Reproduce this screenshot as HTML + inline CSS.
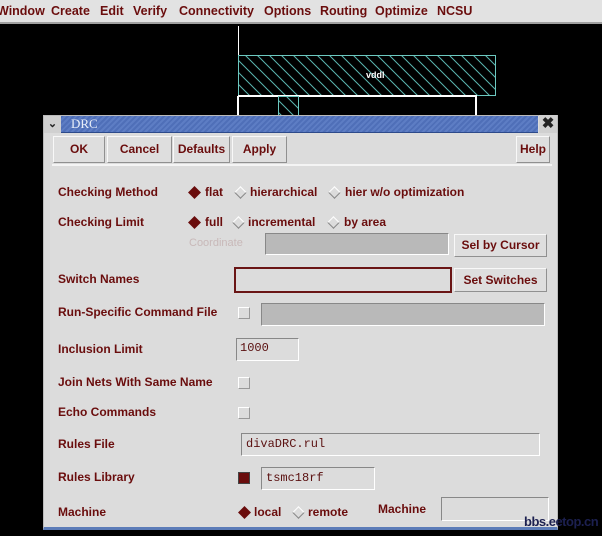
<!DOCTYPE html>
<html><head><style>
*{margin:0;padding:0;box-sizing:border-box}
body{width:602px;height:536px;background:#000;position:relative;overflow:hidden;font-family:"Liberation Sans",sans-serif;font-weight:bold;font-size:12px;color:#6a0d0d}
.a{position:absolute;white-space:nowrap}
.menu{left:0;top:0;width:602px;height:24px;background:#e2e2e2;border-bottom:2px solid #a0a0a0}
.menu span{position:absolute;top:4px;font-size:12.5px}
.btn{position:absolute;background:#dedede;border:1px solid;border-color:#f8f8f8 #909090 #909090 #f8f8f8;text-align:center;line-height:24px}
.lbl{position:absolute;font-size:12px}
.fld{position:absolute;border:1px solid;border-color:#888 #fff #fff #888}
.gray{background:#b9b9b9}
.dia{position:absolute;width:9px;height:9px;transform:rotate(45deg);border:1px solid;border-color:#fff #888 #888 #fff}
.dia.on{background:#6a0d0d;border-color:#6a0d0d}
.cb{position:absolute;width:12px;height:12px;border:1px solid;border-color:#fff #999 #999 #fff;background:#dcdcdc}
.mono{font-family:"Liberation Mono",monospace;font-weight:normal;font-size:12px;color:#5a1010}
</style></head><body>
<div class="a menu">
<span style="left:-3px">Window</span><span style="left:51px">Create</span><span style="left:100px">Edit</span><span style="left:133px">Verify</span><span style="left:179px">Connectivity</span><span style="left:264px">Options</span><span style="left:320px">Routing</span><span style="left:375px">Optimize</span><span style="left:437px">NCSU</span>
</div>
<svg class="a" style="left:0;top:26px" width="602" height="100">
<defs><pattern id="h" width="12" height="12" patternUnits="userSpaceOnUse"><path d="M0,0L12,12M-6,6L6,18M6,-6L18,6" stroke="#5ab5b0" stroke-width="1"/></pattern></defs>
<line x1="238.5" y1="0" x2="238.5" y2="95" stroke="#fff"/>
<rect x="238.5" y="29.5" width="257" height="40" fill="url(#h)" stroke="#6cc8c0"/>
<text x="366" y="52" fill="#fff" font-size="9" font-family="Liberation Sans">vddl</text>
<path d="M238 70H476V95M238 70V95" stroke="#fff" stroke-width="2" fill="none"/>
<rect x="278.5" y="70.5" width="20" height="25" fill="url(#h)" stroke="#6cc8c0"/>
</svg>
<!-- dialog -->
<div class="a" style="left:43px;top:115px;width:515px;height:415px;background:#dcdcdc;border:1px solid #bbb;border-bottom:3px solid #5c7cb8"></div>
<div class="a" style="left:61px;top:116px;width:477px;height:17px;background:repeating-linear-gradient(135deg,#4f6fb8 0 2px,#5d7dc4 2px 4px);border-bottom:1px solid #2d4a8a"></div>
<div class="a" style="left:71px;top:116px;color:#e8eef8;font-family:'Liberation Serif',serif;font-weight:normal;font-size:13px">DRC</div>
<div class="a" style="left:44px;top:116px;width:17px;height:17px;background:#d0d0d0;text-align:center;font-size:11px;color:#222;line-height:17px">&#8964;</div>
<div class="a" style="left:539px;top:115px;width:18px;height:18px;background:#d0d0d0;text-align:center;font-size:15px;color:#222;line-height:18px">&#10006;</div>
<div class="a" style="left:52px;top:134px;width:500px;height:32px;border-bottom:2px solid #f4f4f4"></div>
<div class="btn" style="left:53px;top:136px;width:52px;height:27px">OK</div>
<div class="btn" style="left:107px;top:136px;width:65px;height:27px">Cancel</div>
<div class="btn" style="left:173px;top:136px;width:57px;height:27px">Defaults</div>
<div class="btn" style="left:232px;top:136px;width:55px;height:27px">Apply</div>
<div class="btn" style="left:516px;top:136px;width:34px;height:27px">Help</div>

<div class="lbl" style="left:58px;top:185px">Checking Method</div>
<div class="dia on" style="left:190px;top:188px"></div><div class="lbl" style="left:205px;top:185px">flat</div>
<div class="dia" style="left:236px;top:188px"></div><div class="lbl" style="left:250px;top:185px">hierarchical</div>
<div class="dia" style="left:330px;top:188px"></div><div class="lbl" style="left:345px;top:185px">hier w/o optimization</div>

<div class="lbl" style="left:58px;top:215px">Checking Limit</div>
<div class="dia on" style="left:190px;top:218px"></div><div class="lbl" style="left:205px;top:215px">full</div>
<div class="dia" style="left:234px;top:218px"></div><div class="lbl" style="left:248px;top:215px">incremental</div>
<div class="dia" style="left:329px;top:218px"></div><div class="lbl" style="left:344px;top:215px">by area</div>

<div class="lbl" style="left:189px;top:237px;color:#c8b8b8;font-weight:normal;font-size:11px">Coordinate</div>
<div class="fld gray" style="left:265px;top:233px;width:184px;height:22px"></div>
<div class="btn" style="left:454px;top:234px;width:93px;height:23px;line-height:21px">Sel by Cursor</div>

<div class="lbl" style="left:58px;top:272px">Switch Names</div>
<div class="a" style="left:234px;top:267px;width:218px;height:26px;border:2px solid #6a1515;background:#dcdcdc"></div>
<div class="btn" style="left:454px;top:268px;width:93px;height:24px;line-height:22px">Set Switches</div>

<div class="lbl" style="left:58px;top:305px">Run-Specific Command File</div>
<div class="cb" style="left:238px;top:307px"></div>
<div class="fld gray" style="left:261px;top:303px;width:284px;height:23px"></div>

<div class="lbl" style="left:58px;top:342px">Inclusion Limit</div>
<div class="fld mono" style="left:236px;top:338px;width:63px;height:23px;padding:2px 3px">1000</div>

<div class="lbl" style="left:58px;top:375px">Join Nets With Same Name</div>
<div class="cb" style="left:238px;top:377px"></div>
<div class="lbl" style="left:58px;top:405px">Echo Commands</div>
<div class="cb" style="left:238px;top:407px"></div>

<div class="lbl" style="left:58px;top:437px">Rules File</div>
<div class="fld mono" style="left:241px;top:433px;width:299px;height:23px;padding:3px 4px">divaDRC.rul</div>

<div class="lbl" style="left:58px;top:470px">Rules Library</div>
<div class="a" style="left:238px;top:472px;width:12px;height:12px;background:#6a0d0d;border:1px solid #444"></div>
<div class="fld mono" style="left:261px;top:467px;width:114px;height:23px;padding:3px 4px">tsmc18rf</div>

<div class="lbl" style="left:58px;top:505px">Machine</div>
<div class="dia on" style="left:240px;top:508px"></div><div class="lbl" style="left:254px;top:505px">local</div>
<div class="dia" style="left:294px;top:508px"></div><div class="lbl" style="left:308px;top:505px">remote</div>
<div class="lbl" style="left:378px;top:502px">Machine</div>
<div class="fld" style="left:441px;top:497px;width:108px;height:24px"></div>

<div class="a" style="left:524px;top:514px;color:#1c2050;font-size:13px;letter-spacing:-0.5px">bbs.eetop.cn</div>
</body></html>
